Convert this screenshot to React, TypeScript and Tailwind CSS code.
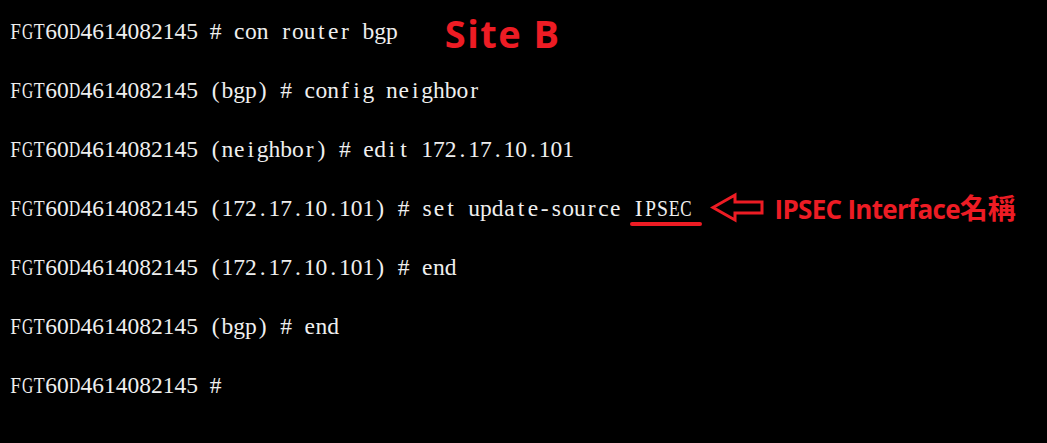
const lines = [
  "FGT60D4614082145 # con router bgp",
  "FGT60D4614082145 (bgp) # config neighbor",
  "FGT60D4614082145 (neighbor) # edit 172.17.10.101",
  "FGT60D4614082145 (172.17.10.101) # set update-source IPSEC",
  "FGT60D4614082145 (172.17.10.101) # end",
  "FGT60D4614082145 (bgp) # end",
  "FGT60D4614082145 #",
];

// the console font is half-width for every glyph, so squeeze the wide ones
const squeeze: Record<string, string> = {
  F: "scale-x-[0.82]",
  G: "scale-x-[0.66]",
  T: "scale-x-[0.76]",
  D: "scale-x-[0.66]",
  E: "scale-x-[0.76]",
  C: "scale-x-[0.72]",
  P: "scale-x-[0.82]",
  S: "scale-x-[0.84]",
  m: "scale-x-[0.62]",
  w: "scale-x-[0.64]",
};

function TermLine({ text }: { text: string }) {
  return (
    <div className="flex">
      {[...text].map((c, i) => (
        <span key={i} className="inline-flex w-[11.76px] shrink-0 justify-center">
          {squeeze[c] ? (
            <span className={`inline-block ${squeeze[c]}`}>{c}</span>
          ) : (
            c
          )}
        </span>
      ))}
    </div>
  );
}

function LeftArrow() {
  return (
    <svg width="56" height="31" viewBox="0 0 56 31" className="shrink-0">
      <polygon
        points="3,15.5 25,3 25,10 52,10 52,21 25,21 25,28"
        fill="none"
        stroke="#ed1c24"
        strokeWidth="3"
        strokeLinejoin="miter"
      />
    </svg>
  );
}

export default function App() {
  return (
    <div className="w-[1047px] h-[443px] overflow-hidden bg-black pl-[10px] pt-[1.5px] text-[#efefef] text-[23.5px] leading-[59px] font-['Liberation_Serif',serif]">
      {lines.map((line, i) => (
        <div key={i} className="relative flex items-start">
          <TermLine text={line} />
          {i === 0 && (
            <span className="ml-[47px] mt-[12px] text-[38px] leading-none font-bold tracking-[1.5px] text-[#ed1c24] font-['Open_Sans',sans-serif]">
              Site B
            </span>
          )}
          {i === 3 && (
            <>
              <span className="absolute left-[620px] top-[43px] h-[4px] w-[72px] rounded-full bg-[#ed1c24]" />
              <span className="ml-[18px] mt-[13px]">
                <LeftArrow />
              </span>
              <span className="ml-[9px] mt-[14px] flex items-baseline leading-none font-bold text-[#ed1c24] font-['Open_Sans','Noto_Sans_CJK_TC',sans-serif]">
                <span className="text-[26px] tracking-[-0.7px]">IPSEC Interface</span>
                <span className="text-[28px] font-['Noto_Sans_CJK_TC',sans-serif]">名稱</span>
              </span>
            </>
          )}
        </div>
      ))}
    </div>
  );
}
